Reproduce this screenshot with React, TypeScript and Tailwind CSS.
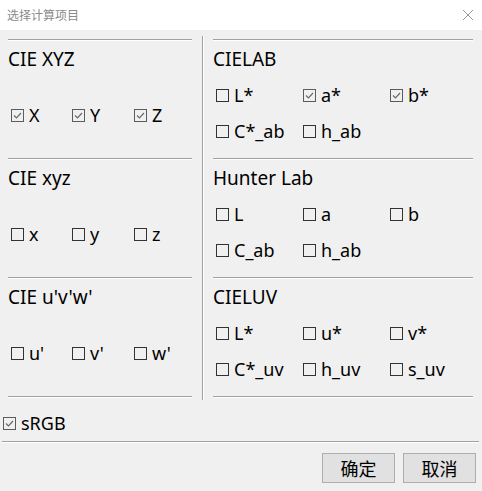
const font = "font-['Noto_Sans','Noto_Sans_CJK_SC',sans-serif]"

function Box({ checked }: { checked?: boolean }) {
  return (
    <span
      className={`w-[13px] h-[13px] shrink-0 border ${checked ? 'border-[#5c5c5c]' : 'border-[#333333]'} flex items-center justify-center`}
    >
      {checked && (
        <svg width="11" height="11" viewBox="0 0 11 11">
          <polyline points="2,5.5 4.5,8 9,3" fill="none" stroke="#6a6a6a" strokeWidth="1.2" />
        </svg>
      )}
    </span>
  )
}

function Check({ label, checked }: { label: string; checked?: boolean }) {
  return (
    <div className="flex items-center gap-[5px] h-[20px]">
      <Box checked={checked} />
      <span className="text-[18px] leading-none text-black whitespace-nowrap">{label}</span>
    </div>
  )
}

function Rule() {
  return (
    <div className="shrink-0">
      <div className="h-px bg-[#a0a0a0]" />
      <div className="h-px bg-white" />
    </div>
  )
}

type Item = { label: string; checked?: boolean }

function LeftGroup({ title, items }: { title: string; items: Item[] }) {
  return (
    <div>
      <Rule />
      <div className="h-[117px] pt-[9px]">
        <p className="text-[19px] leading-[19px] text-black">{title}</p>
        <div className="mt-[36px] ml-[3px] grid grid-cols-[61px_62px_61px]">
          {items.map((it) => (
            <Check key={it.label} label={it.label} checked={it.checked} />
          ))}
        </div>
      </div>
    </div>
  )
}

function RightGroup({ title, rows }: { title: string; rows: Item[][] }) {
  return (
    <div>
      <Rule />
      <div className="h-[117px] pt-[9px]">
        <p className="text-[19px] leading-[19px] text-black">{title}</p>
        <div className="mt-[16px] ml-[3px] flex flex-col gap-[16px]">
          {rows.map((row, i) => (
            <div key={i} className="grid grid-cols-[87px_87px_86px]">
              {row.map((it) => (
                <Check key={it.label} label={it.label} checked={it.checked} />
              ))}
            </div>
          ))}
        </div>
      </div>
    </div>
  )
}

export default function App() {
  return (
    <div className={`w-[482px] h-[491px] flex flex-col bg-[#f0f0f0] ${font}`}>
      <div className="h-[30px] shrink-0 bg-white flex items-center justify-between pl-[7px] pr-[8px]">
        <span className="text-[12px] text-[#8a8a8a] font-['Noto_Sans_CJK_SC',sans-serif]">选择计算项目</span>
        <svg width="12" height="12" viewBox="0 0 12 12">
          <path d="M1 1L11 11M11 1L1 11" stroke="#9a9a9a" strokeWidth="1" />
        </svg>
      </div>

      <div className="flex items-start pt-[6px] shrink-0">
        <div className="w-[184px] ml-[8px] mt-[3px]">
          <LeftGroup
            title="CIE XYZ"
            items={[
              { label: 'X', checked: true },
              { label: 'Y', checked: true },
              { label: 'Z', checked: true },
            ]}
          />
          <LeftGroup title="CIE xyz" items={[{ label: 'x' }, { label: 'y' }, { label: 'z' }]} />
          <LeftGroup title="CIE u'v'w'" items={[{ label: "u'" }, { label: "v'" }, { label: "w'" }]} />
          <Rule />
        </div>
        <div className="ml-[10px] flex h-[364px]">
          <div className="w-px bg-[#a0a0a0]" />
          <div className="w-px bg-white" />
        </div>
        <div className="w-[260px] ml-[9px] mt-[3px]">
          <RightGroup
            title="CIELAB"
            rows={[
              [{ label: 'L*' }, { label: 'a*', checked: true }, { label: 'b*', checked: true }],
              [{ label: 'C*_ab' }, { label: 'h_ab' }],
            ]}
          />
          <RightGroup
            title="Hunter Lab"
            rows={[
              [{ label: 'L' }, { label: 'a' }, { label: 'b' }],
              [{ label: 'C_ab' }, { label: 'h_ab' }],
            ]}
          />
          <RightGroup
            title="CIELUV"
            rows={[
              [{ label: 'L*' }, { label: 'u*' }, { label: 'v*' }],
              [{ label: 'C*_uv' }, { label: 'h_uv' }, { label: 's_uv' }],
            ]}
          />
          <Rule />
        </div>
      </div>

      <div className="mt-[13px] ml-[3px] shrink-0">
        <Check label="sRGB" checked />
      </div>

      <div className="mt-[8px] mx-[2px] w-[477px] shrink-0">
        <Rule />
      </div>

      <div className="mt-[10px] flex justify-end gap-[8px] pr-[6px] shrink-0">
        <button className="w-[73px] h-[30px] bg-[#e1e1e1] border border-[#adadad] text-[18px] leading-none text-black font-['Noto_Sans_CJK_SC',sans-serif]">
          确定
        </button>
        <button className="w-[73px] h-[30px] bg-[#e1e1e1] border border-[#adadad] text-[18px] leading-none text-black font-['Noto_Sans_CJK_SC',sans-serif]">
          取消
        </button>
      </div>
    </div>
  )
}
